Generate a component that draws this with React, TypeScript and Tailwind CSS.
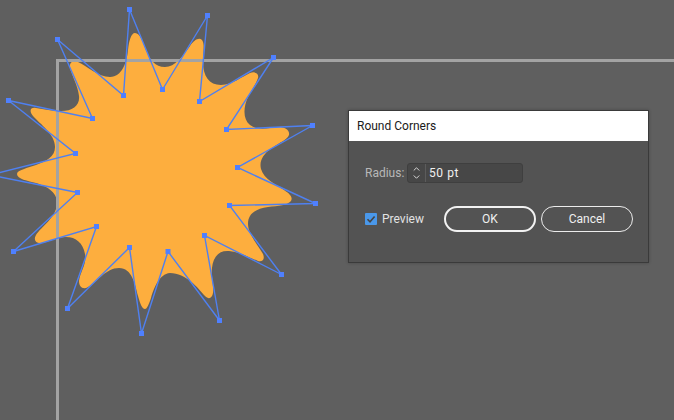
import { ChevronDown, ChevronUp } from "lucide-react";

// anchor handles, clockwise, alternating inner / outer
const handles: [number, number][] = [
  [162.5, 89.5], [207.5, 15.5], [199.5, 101.5], [273.5, 57.5], [226.5, 129.5], [312.5, 125.5],
  [237.5, 167.5], [315.5, 203.5], [229.5, 205.5], [281.5, 274.5], [204.5, 235.5], [219.5, 320.5],
  [168, 251.5], [141.5, 333.5], [129.5, 247.5], [67.5, 308.5], [96.5, 226.5], [13.5, 251.5],
  [77.5, 192.5], [-10, 175], [75.5, 153.5], [8.5, 100.5], [92.5, 118.5], [57.5, 39.5],
  [123.5, 95.5], [129.5, 9.5],
];

const starPath =
  "M135 33 C140 33 143 42 146 50 C150 60 155 67 165 67 C175 67 183 56 190 46 C194 40 199 37 202 40 " +
  "C205 44 203 52 203 62 C203 76 209 85 221 85 C232 85 243 76 250 73 C256 71 259 74 258 78 " +
  "C256 84 252 90 248 97 C243 108 243 119 250 125 C258 131 268 128 278 127 C285 127 290 130 289 135 " +
  "C287 140 280 142 272 148 C263 154 259 161 261 169 C264 179 275 184 284 190 C290 194 293 197 291 201 " +
  "C288 205 278 206 268 207 C255 209 248 214 248 224 C248 234 258 245 263 254 C265 259 263 262 258 261 " +
  "C250 258 240 252 229 251 C218 250 213 258 212 268 C211 278 214 286 213 293 C212 298 209 300 205 296 " +
  "C198 288 186 273 170 273 C159 274 154 288 151 298 C149 304 147 309 145 309 C142 309 140 303 138 296 " +
  "C135 284 132 268 119 268 C106 268 97 282 88 287 C83 290 79 287 79 281 C80 272 87 264 85 254 " +
  "C83 243 76 237 66 237 C57 237 48 242 42 243 C36 244 33 240 36 235 C41 227 56 218 57 204 " +
  "C58 192 46 186 36 183 C28 181 17 179 17 174 C17 170 28 168 36 165 C46 161 55 157 55 147 " +
  "C55 134 40 124 33 116 C29 111 30 107 36 108 C44 109 52 111 61 111 C73 111 80 105 79 96 " +
  "C78 86 72 76 70 68 C69 62 73 60 78 62 C87 66 98 77 110 77 C122 77 127 62 128 50 C129 41 131 33 135 33 Z";

const handlePath = handles.map(([x, y], i) => `${i === 0 ? "M" : "L"}${x} ${y}`).join(" ") + " Z";

const Artwork = () => (
  <svg width="674" height="420" viewBox="0 0 674 420" className="absolute left-0 top-0">
    <path d={starPath} fill="#fdae3e" />
    <path d="M57.5 420 V60.5 H674" fill="none" stroke="#a3a3a3" strokeWidth="3" />
    <path d={handlePath} fill="none" stroke="#4f80f0" strokeWidth="1.4" />
    {handles.map(([x, y]) => (
      <rect key={`${x}-${y}`} x={x - 2.5} y={y - 2.5} width="5" height="5" fill="#4f80ff" />
    ))}
  </svg>
);

const RoundCornersDialog = () => (
  <div className="absolute left-[348px] top-[110px] w-[301px] h-[153px] bg-[#535353] border border-[#3a3a3a] shadow-[0_0_3px_rgba(0,0,0,0.25)]">
    <div className="h-[30px] bg-white pl-2 flex items-center text-[12px] text-[#1a1a1a]">Round Corners</div>

    <div className="flex items-center pl-4 mt-[22px]">
      <span className="w-[42px] text-[12px] text-[#b8b8b8]">Radius:</span>
      <div className="flex w-[116px] h-5 bg-[#474747] border border-[#3f3f3f] rounded-[3px]">
        <div className="w-[18px] flex flex-col items-center justify-center border-r border-[#5c5c5c] text-[#f0f0f0]">
          <ChevronUp size={13} strokeWidth={2} className="-mb-[1px]" />
          <ChevronDown size={13} strokeWidth={2} className="-mt-[1px]" />
        </div>
        <span className="pl-[3px] text-[12px] leading-[18px] tracking-[0.6px] text-[#f0f0f0]">50 pt</span>
      </div>
    </div>

    <div className="flex items-center pl-4 mt-[23px]">
      <div className="w-3 h-3 bg-[#4a98ea] rounded-[1px] flex items-center justify-center">
        <svg width="10" height="10" viewBox="0 0 10 10">
          <path d="M1.5 5.2 L4 7.8 L8.6 2.4" fill="none" stroke="#444" strokeWidth="1.6" />
        </svg>
      </div>
      <span className="ml-[5px] w-[62px] text-[12px] text-[#e2e2e2]">Preview</span>
      <button className="w-[92px] h-[26px] rounded-full border-2 border-[#f2f2f2] text-[12px] text-[#f0f0f0]">OK</button>
      <button className="ml-[5px] w-[92px] h-[26px] rounded-full border border-[#ececec] text-[12px] text-[#f0f0f0]">Cancel</button>
    </div>
  </div>
);

export default function App() {
  return (
    <div
      className="relative w-[674px] h-[420px] overflow-hidden bg-[#5f5f5f]"
      style={{ fontFamily: 'Roboto, "Noto Sans", sans-serif' }}
    >
      <Artwork />
      <RoundCornersDialog />
    </div>
  );
}
